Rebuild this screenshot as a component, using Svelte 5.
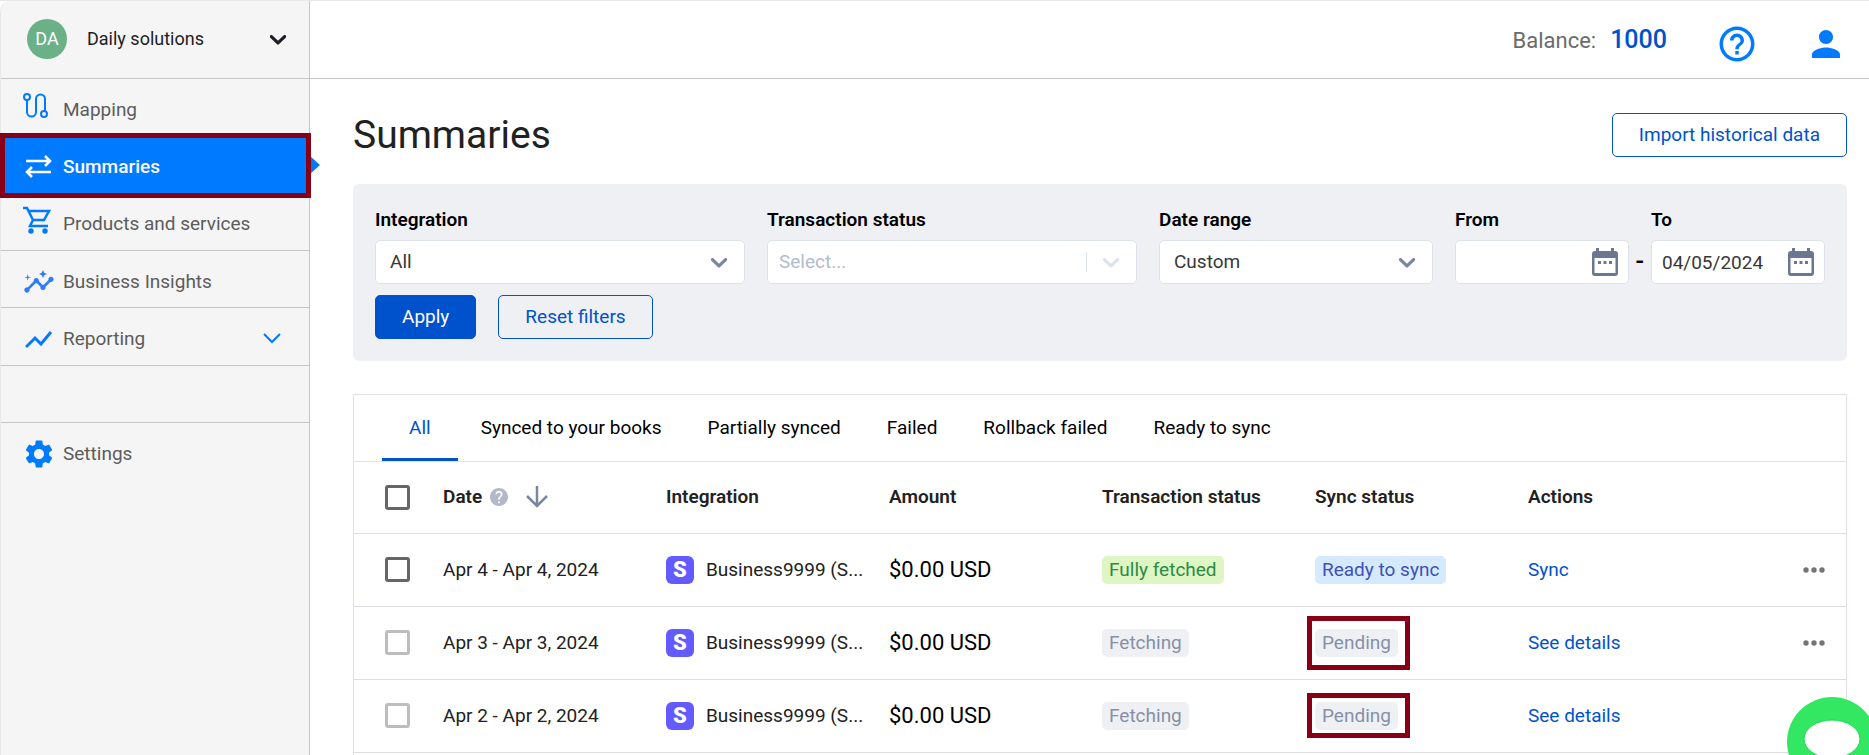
<script lang="ts">
  type Row = {
    id: number;
    period: string;
    integration: string;
    amount: string;
    status: string;
    statusTone: string;
    sync: string;
    syncTone: string;
    action: string;
    disabled: boolean;
    mark: string;
  };

  const tabs = [
    'All',
    'Synced to your books',
    'Partially synced',
    'Failed',
    'Rollback failed',
    'Ready to sync',
  ];

  const rows: Row[] = [
    {
      id: 1,
      period: 'Apr 4 - Apr 4, 2024',
      integration: 'Business9999 (S...',
      amount: '$0.00 USD',
      status: 'Fully fetched',
      statusTone: 'green',
      sync: 'Ready to sync',
      syncTone: 'blue',
      action: 'Sync',
      disabled: false,
      mark: '',
    },
    {
      id: 2,
      period: 'Apr 3 - Apr 3, 2024',
      integration: 'Business9999 (S...',
      amount: '$0.00 USD',
      status: 'Fetching',
      statusTone: 'grey',
      sync: 'Pending',
      syncTone: 'grey',
      action: 'See details',
      disabled: true,
      mark: 'tall',
    },
    {
      id: 3,
      period: 'Apr 2 - Apr 2, 2024',
      integration: 'Business9999 (S...',
      amount: '$0.00 USD',
      status: 'Fetching',
      statusTone: 'grey',
      sync: 'Pending',
      syncTone: 'grey',
      action: 'See details',
      disabled: true,
      mark: 'short',
    },
  ];

  let activeTab = $state('All');
  let dateTo = $state('04/05/2024');
  let dateFrom = $state('');
</script>

{#snippet chevron()}
  <svg class="chevron" viewBox="0 0 20 20" width="28" height="28" aria-hidden="true">
    <path
      fill="currentColor"
      d="M4.516 7.548c0.436-0.446 1.043-0.481 1.576 0l3.908 3.747 3.908-3.747c0.533-0.481 1.141-0.446 1.574 0 0.436 0.445 0.408 1.197 0 1.615-0.406 0.418-4.695 4.502-4.695 4.502-0.217 0.223-0.502 0.335-0.787 0.335s-0.57-0.112-0.789-0.335c0 0-4.287-4.084-4.695-4.502s-0.436-1.17 0-1.615z"
    />
  </svg>
{/snippet}

{#snippet calendar()}
  <svg viewBox="0 0 26 28" width="26" height="28" aria-hidden="true">
    <path
      fill="currentColor"
      fill-rule="evenodd"
      d="M4 0h3v3h12V0h3v3h1a3 3 0 0 1 3 3v19a3 3 0 0 1-3 3H3a3 3 0 0 1-3-3V6a3 3 0 0 1 3-3h1zM2.500 10v15h21V10zM6 13h3v3H6zM11.500 13h3v3h-3zM17 13h3v3h-3z"
    />
  </svg>
{/snippet}

<div class="shell">
  <aside class="sidebar">
    <button class="company" type="button">
      <span class="avatar">DA</span>
      <span class="company-name">Daily solutions</span>
      {@render chevron()}
    </button>

    <nav class="nav" aria-label="Main">
      <a class="nav-item plain" href="#mapping">
        <svg class="raised" viewBox="0 0 28 28" width="28" height="28" fill="none" stroke="currentColor" stroke-width="2" aria-hidden="true">
          <circle cx="4" cy="5" r="3" />
          <circle cx="21" cy="22" r="3" />
          <path d="M4 8v12a4.500 4.500 0 0 0 9 0V7a4.500 4.500 0 0 1 9 0v12" />
        </svg>
        Mapping
      </a>
      <a class="nav-item active" href="#summaries" aria-current="page">
        <svg viewBox="0 0 28 28" width="28" height="28" fill="none" stroke="currentColor" stroke-width="2.500" aria-hidden="true">
          <path d="M1 8h24M20 3l5 5-5 5M26 19H2M7 14l-5 5 5 5" />
        </svg>
        Summaries
      </a>
      <a class="nav-item" href="#products">
        <svg class="raised" viewBox="0 0 28 28" width="28" height="28" aria-hidden="true">
          <path
            fill="none"
            stroke="currentColor"
            stroke-width="2.500"
            d="M0 2h4l6 12h11l5-9H6M10 14l-3 6h18"
          />
          <circle cx="8" cy="25" r="2.700" fill="currentColor" />
          <circle cx="22" cy="25" r="2.700" fill="currentColor" />
        </svg>
        Products and services
      </a>
      <a class="nav-item" href="#insights">
        <svg class="insights" viewBox="0 0 24 24" width="32" height="32" fill="currentColor" aria-hidden="true">
          <path
            d="M21 8c-1.45 0-2.26 1.44-1.93 2.51l-3.55 3.56c-.3-.09-.74-.09-1.04 0l-2.55-2.55C12.27 10.45 11.46 9 10 9c-1.45 0-2.27 1.44-1.93 2.52l-4.56 4.55C2.44 15.74 1 16.55 1 18c0 1.1.9 2 2 2 1.45 0 2.26-1.44 1.93-2.51l4.55-4.56c.3.09.74.09 1.04 0l2.55 2.55C12.73 16.55 13.54 18 15 18c1.45 0 2.27-1.44 1.93-2.52l3.56-3.55C21.56 12.26 23 11.45 23 10c0-1.1-.9-2-2-2z"
          />
          <path d="M15 9l.94-2.07L18 6l-2.06-.93L15 3l-.92 2.07L12 6l2.08.93zM3.5 11L4 9l2-.5L4 8l-.5-2L3 8l-2 .5L3 9z" />
        </svg>
        Business Insights
      </a>
      <a class="nav-item" href="#reporting">
        <svg viewBox="0 0 28 28" width="28" height="28" fill="none" stroke="currentColor" stroke-width="3" aria-hidden="true">
          <path d="M1 22l9-9 6 6L26 7" />
        </svg>
        Reporting
        <svg class="expand" viewBox="0 0 18 12" width="18" height="12" fill="none" stroke="currentColor" stroke-width="2" aria-hidden="true">
          <path d="M1 1l8 8 8-8" />
        </svg>
      </a>
      <div class="nav-item"></div>
      <a class="nav-item plain" href="#settings">
        <svg viewBox="2 2 20 20" width="28" height="28" fill="currentColor" aria-hidden="true">
          <path
            d="M19.14 12.94c.04-.3.06-.61.06-.94 0-.32-.02-.64-.07-.94l2.03-1.58c.18-.14.23-.41.12-.61l-1.92-3.32c-.12-.22-.37-.29-.59-.22l-2.39.96c-.5-.38-1.03-.7-1.62-.94l-.36-2.54c-.04-.24-.24-.41-.48-.41h-3.84c-.24 0-.43.17-.47.41l-.36 2.54c-.59.24-1.13.57-1.62.94l-2.39-.96c-.22-.08-.47 0-.59.22L2.74 8.87c-.12.21-.08.47.12.61l2.03 1.58c-.05.3-.09.63-.09.94s.02.64.07.94l-2.03 1.58c-.18.14-.23.41-.12.61l1.92 3.32c.12.22.37.29.59.22l2.39-.96c.5.38 1.03.7 1.62.94l.36 2.54c.05.24.24.41.48.41h3.84c.24 0 .44-.17.47-.41l.36-2.54c.59-.24 1.13-.56 1.62-.94l2.39.96c.22.08.47 0 .59-.22l1.92-3.32c.12-.22.07-.47-.12-.61l-2.01-1.58zM12 15.6c-1.98 0-3.6-1.62-3.6-3.6s1.62-3.6 3.6-3.6 3.6 1.62 3.6 3.6-1.62 3.6-3.6 3.6z"
          />
        </svg>
        Settings
      </a>
    </nav>
  </aside>

  <div class="page">
    <header class="topbar">
      <p class="balance">Balance: <strong>1000</strong></p>
      <button class="icon-button" type="button" aria-label="Help">
        <svg viewBox="0 0 24 24" width="42" height="42" fill="currentColor" aria-hidden="true">
          <path
            d="M11 18h2v-2h-2v2zm1-16C6.48 2 2 6.48 2 12s4.48 10 10 10 10-4.48 10-10S17.52 2 12 2zm0 18c-4.41 0-8-3.59-8-8s3.59-8 8-8 8 3.59 8 8-3.59 8-8 8zm0-14c-2.21 0-4 1.79-4 4h2c0-1.1.9-2 2-2s2 .9 2 2c0 2-3 1.75-3 5h2c0-2.25 3-2.5 3-5 0-2.21-1.79-4-4-4z"
          />
        </svg>
      </button>
      <button class="icon-button" type="button" aria-label="Account">
        <svg viewBox="0 0 24 24" width="42" height="42" fill="currentColor" aria-hidden="true">
          <path d="M12 12c2.21 0 4-1.79 4-4s-1.79-4-4-4-4 1.79-4 4 1.79 4 4 4zm0 2c-2.67 0-8 1.34-8 4v2h16v-2c0-2.66-5.33-4-8-4z" />
        </svg>
      </button>
    </header>

    <main class="content">
      <div class="heading">
        <h1>Summaries</h1>
        <button class="button outline" type="button">Import historical data</button>
      </div>

      <form class="filters" onsubmit={(event) => event.preventDefault()}>
        <div class="fields">
          <div class="field">
            <label for="integration">Integration</label>
            <div class="control">
              <select id="integration"><option>All</option></select>
              {@render chevron()}
            </div>
          </div>
          <div class="field">
            <label for="status">Transaction status</label>
            <div class="control divided">
              <select id="status" class="empty"><option>Select...</option></select>
              {@render chevron()}
            </div>
          </div>
          <div class="field">
            <label for="range">Date range</label>
            <div class="control">
              <select id="range"><option>Custom</option></select>
              {@render chevron()}
            </div>
          </div>
          <div class="field from">
            <label for="from">From</label>
            <div class="control date">
              <input id="from" type="text" bind:value={dateFrom} />
              {@render calendar()}
            </div>
          </div>
          <div class="field">
            <label for="to">To</label>
            <div class="control date">
              <input id="to" type="text" bind:value={dateTo} />
              {@render calendar()}
            </div>
          </div>
        </div>
        <div class="filter-actions">
          <button class="button primary" type="submit">Apply</button>
          <button class="button outline" type="reset">Reset filters</button>
        </div>
      </form>

      <section class="card">
        <div class="tabs" role="tablist">
          {#each tabs as tab}
            <button
              type="button"
              role="tab"
              class="tab"
              class:selected={activeTab === tab}
              aria-selected={activeTab === tab}
              onclick={() => (activeTab = tab)}
            >
              {tab}
            </button>
          {/each}
        </div>

        <table>
          <colgroup>
            <col class="col-check" />
            <col class="col-wide" />
            <col class="col-wide" />
            <col class="col-mid" />
            <col class="col-mid" />
            <col class="col-mid" />
            <col />
            <col class="col-more" />
          </colgroup>
          <thead>
            <tr>
              <th class="check"><input type="checkbox" aria-label="Select all" /></th>
              <th>
                <span class="date-head">
                  Date
                  <svg class="hint" viewBox="2 2 20 20" width="18" height="18" fill="currentColor" aria-hidden="true">
                    <path
                      d="M12 2C6.48 2 2 6.48 2 12s4.48 10 10 10 10-4.48 10-10S17.52 2 12 2zm1 17h-2v-2h2v2zm2.07-7.75l-.9.92C13.45 12.9 13 13.5 13 15h-2v-.5c0-1.1.45-2.1 1.17-2.83l1.24-1.26c.37-.36.59-.86.59-1.41 0-1.1-.9-2-2-2s-2 .9-2 2H8c0-2.21 1.79-4 4-4s4 1.79 4 4c0 .88-.36 1.68-.93 2.25z"
                    />
                  </svg>
                  <svg class="sort" viewBox="0 0 22 22" width="22" height="22" fill="none" stroke="currentColor" stroke-width="2.500" aria-hidden="true">
                    <path d="M11 0v20M1 10l10 10 10-10" />
                  </svg>
                </span>
              </th>
              <th>Integration</th>
              <th>Amount</th>
              <th>Transaction status</th>
              <th>Sync status</th>
              <th>Actions</th>
              <th></th>
            </tr>
          </thead>
          <tbody>
            {#each rows as row (row.id)}
              <tr>
                <td class="check">
                  <input type="checkbox" aria-label="Select {row.period}" disabled={row.disabled} />
                </td>
                <td>{row.period}</td>
                <td>
                  <span class="integration">
                    <span class="logo" aria-hidden="true">S</span>
                    <span>{row.integration}</span>
                  </span>
                </td>
                <td class="amount">{row.amount}</td>
                <td><span class="pill {row.statusTone}">{row.status}</span></td>
                <td><span class="pill {row.syncTone} {row.mark}">{row.sync}</span></td>
                <td><a href="#row-{row.id}">{row.action}</a></td>
                <td class="more">
                  <button class="icon-button" type="button" aria-label="More actions">
                    <svg viewBox="0 0 22 6" width="22" height="6" fill="currentColor" aria-hidden="true">
                      <circle cx="3" cy="3" r="2.7" />
                      <circle cx="11" cy="3" r="2.7" />
                      <circle cx="19" cy="3" r="2.7" />
                    </svg>
                  </button>
                </td>
              </tr>
            {/each}
          </tbody>
        </table>
      </section>
    </main>
  </div>

  <button class="chat" type="button" aria-label="Open chat">
    <svg viewBox="0 0 90 90" width="90" height="90" aria-hidden="true">
      <circle cx="45" cy="45" r="45" fill="#33e763" />
      <ellipse cx="45" cy="42" rx="28" ry="19" fill="#fff" stroke="#14dc50" />
    </svg>
  </button>
</div>

<style>
  :global(body) {
    background: #fff;
  }

  .shell,
  .shell * {
    box-sizing: border-box;
  }

  .shell {
    display: flex;
    min-height: 100vh;
    border-top: 1px solid #e8e8e8;
    font-family: Roboto, 'Liberation Sans', sans-serif;
    font-size: 19px;
    line-height: 24px;
    color: #212121;
  }

  button,
  input,
  select {
    font: inherit;
    color: inherit;
  }

  button {
    cursor: pointer;
  }

  a {
    color: #0052cc;
    text-decoration: none;
  }

  svg {
    display: block;
    flex: none;
  }

  /* Sidebar */
  .sidebar {
    flex: none;
    width: 310px;
    background: #f5f5f5;
    border-left: 1px solid #e8e8e8;
    border-right: 1px solid #c4c5c9;
    border-top-left-radius: 10px;
  }

  .company {
    display: flex;
    align-items: center;
    gap: 20px;
    width: 100%;
    height: 78px;
    padding: 0 17px 2px 26px;
    border: 0;
    border-bottom: 1px solid #c4c5c9;
    background: none;
    color: #1d1d24;
    font-size: 18px;
    text-align: left;
  }

  .company-name {
    flex: 1;
  }

  .avatar {
    display: grid;
    place-items: center;
    width: 40px;
    height: 40px;
    border-radius: 50%;
    background: #6ab187;
    color: #fff;
  }

  .nav {
    display: grid;
    grid-template-rows: repeat(6, 1fr) auto;
    height: 401px;
  }

  .nav-item {
    position: relative;
    display: flex;
    align-items: center;
    gap: 10px;
    min-height: 57px;
    padding: 5px 28px 0 24px;
    border-bottom: 1px solid #c4c5c9;
    color: #5c5c5c;
  }

  .nav-item svg {
    color: #007bff;
  }

  .nav-item .raised {
    margin: 0 2px 8px -2px;
  }

  .nav-item .insights {
    margin: 0 -2px;
    color: #2f7df6;
  }

  .nav-item .expand {
    margin-left: auto;
  }

  .nav-item.plain {
    border-bottom: 0;
  }

  .nav-item.active {
    background: #007bff;
    border-color: #007bff;
    color: #fff;
    font-weight: 500;
  }

  .nav-item.active svg {
    color: #fff;
  }

  .nav-item.active::before {
    content: '';
    position: absolute;
    top: 20px;
    right: -11px;
    border: solid transparent;
    border-width: 9px 0 9px 10px;
    border-left-color: #007bff;
  }

  .nav-item.active::after {
    content: '';
    position: absolute;
    inset: -3px -2px -5px -1px;
    border: 5px solid #870016;
  }

  /* Top bar */
  .page {
    flex: 1;
    display: flex;
    flex-direction: column;
    min-width: 0;
  }

  .topbar {
    display: flex;
    align-items: center;
    justify-content: flex-end;
    gap: 47px;
    height: 78px;
    padding: 8px 22px 0 0;
    border-bottom: 1px solid #c4c5c9;
  }

  .balance {
    display: flex;
    align-items: baseline;
    gap: 14px;
    margin: 0 2px 0 0;
    padding-bottom: 6px;
    color: #6b6b6b;
    font-size: 22px;
  }

  .balance strong {
    color: #0052cc;
    font-size: 25px;
    font-weight: 500;
  }

  .icon-button {
    padding: 0;
    border: 0;
    background: none;
    color: #007bff;
  }

  /* Content */
  .content {
    flex: 1;
    display: flex;
    flex-direction: column;
    padding: 28px 22px 0 43px;
  }

  .heading {
    display: flex;
    align-items: center;
    justify-content: space-between;
    min-height: 56px;
    margin-bottom: 21px;
  }

  h1 {
    margin: 0;
    font-size: 39px;
    font-weight: 400;
    line-height: 48px;
  }

  .button {
    height: 44px;
    padding: 0 26px;
    border: 1px solid #0052cc;
    border-radius: 5px;
  }

  .outline {
    background: none;
    color: #0052cc;
  }

  .primary {
    background: #0052cc;
    color: #fff;
  }

  .filters {
    margin-bottom: 33px;
    padding: 24px 22px 22px;
    border-radius: 6px;
    background: #eff0f4;
  }

  .fields {
    display: grid;
    grid-template-columns: 370fr 370fr 274fr 174fr 174fr;
    gap: 22px;
    margin-bottom: 11px;
  }

  .field {
    position: relative;
    display: flex;
    flex-direction: column;
    gap: 8px;
    min-width: 0;
  }

  .field label {
    color: #000;
    font-weight: 600;
  }

  .from::after {
    content: '-';
    position: absolute;
    right: -15px;
    bottom: 10px;
    color: #000;
    font-size: 25px;
    font-weight: 500;
  }

  .control {
    position: relative;
    display: flex;
    align-items: center;
    height: 44px;
    border: 1px solid #dde2ec;
    border-radius: 5px;
    background: #fff;
    color: #7a869f;
  }

  .control select,
  .control input {
    width: 100%;
    height: 100%;
    min-width: 0;
    padding: 0 40px 0 14px;
    border: 0;
    border-radius: 5px;
    outline: 0;
    background: transparent;
    appearance: none;
    color: #383838;
  }

  .control input {
    padding: 0 0 0 10px;
  }

  .control select.empty {
    padding-left: 11px;
    color: #b3bbcd;
  }

  .control .chevron {
    position: absolute;
    right: 11px;
    pointer-events: none;
  }

  .divided {
    color: #dde2ec;
  }

  .divided::after {
    content: '';
    position: absolute;
    right: 49px;
    width: 1px;
    height: 20px;
    background: #dde2ec;
  }

  .date {
    padding-right: 10px;
    color: #6b778f;
  }

  .filter-actions {
    display: flex;
    gap: 22px;
  }

  /* Table */
  .card {
    flex: 1;
    border: 1px solid #dfe2ea;
    border-bottom: 0;
  }

  .tabs {
    display: flex;
    height: 67px;
    padding-left: 28px;
    border-bottom: 1px solid #dfe2ea;
  }

  .tab {
    padding: 0 23px;
    border: 0;
    border-top: 3px solid transparent;
    border-bottom: 3px solid transparent;
    background: none;
    color: #000;
  }

  .tab.selected {
    padding: 0 27px;
    border-bottom-color: #0052cc;
    color: #0052cc;
  }

  table {
    width: 100%;
    table-layout: fixed;
    border-collapse: collapse;
  }

  .col-check {
    width: 89px;
  }

  .col-wide {
    width: 223px;
  }

  .col-mid {
    width: 213px;
  }

  .col-more {
    width: 70px;
  }

  th,
  td {
    height: 73px;
    padding: 0;
    border-bottom: 1px solid #dcdee3;
    text-align: left;
    white-space: nowrap;
  }

  th {
    height: 71px;
    font-weight: 600;
  }

  .check {
    padding-left: 31px;
  }

  .check input {
    display: block;
    width: 25px;
    height: 25px;
    margin: 0;
    border: 3px solid #666;
    border-radius: 3px;
    background: #fff;
    appearance: none;
  }

  .check input:disabled {
    border-color: #bdbdbd;
  }

  .date-head {
    display: flex;
    align-items: center;
    gap: 8px;
  }

  .hint {
    color: #b3b9c9;
  }

  .sort {
    margin-left: 10px;
    color: #7a869f;
  }

  .integration {
    display: flex;
    align-items: center;
    gap: 12px;
  }

  .logo {
    flex: none;
    width: 28px;
    height: 28px;
    border-radius: 6px;
    background: #635bff;
    color: #fff;
    font-size: 22px;
    font-weight: 900;
    line-height: 28px;
    text-align: center;
  }

  .amount {
    color: #000;
    font-size: 22px;
  }

  .pill {
    position: relative;
    display: inline-block;
    height: 28px;
    padding: 0 7px;
    border-radius: 5px;
    line-height: 28px;
  }

  .green {
    background: #def5c4;
    color: #2b8a43;
  }

  .blue {
    background: #d6eaff;
    color: #3f51b5;
  }

  .grey {
    background: #eff0f4;
    color: #8590a6;
  }

  .tall::after,
  .short::after {
    content: '';
    position: absolute;
    inset: -13px -12px -13px -8px;
    border: 5px solid #870016;
  }

  .short::after {
    top: -9px;
    bottom: -8px;
  }

  .more .icon-button {
    display: block;
    margin: 0 21px 0 auto;
    color: #757575;
  }

  .chat {
    position: fixed;
    right: -8px;
    bottom: -32px;
    padding: 0;
    border: 0;
    background: none;
  }
</style>
